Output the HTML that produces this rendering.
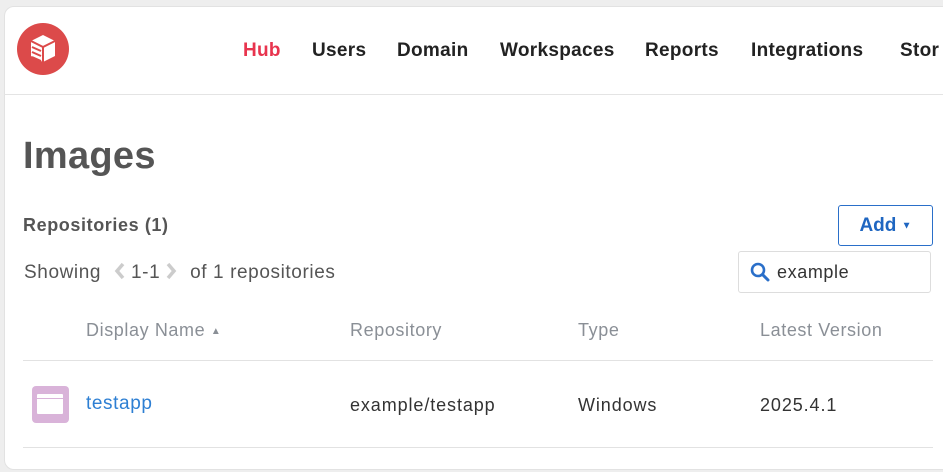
<!DOCTYPE html>
<html><head><style>
body{margin:0;width:943px;height:472px;background:#eeeeee;font-family:"Liberation Sans",sans-serif;overflow:hidden;position:relative}
.card{position:absolute;left:4px;top:6px;width:960px;height:462px;background:#fff;border:1px solid #e2e2e2;border-radius:10px}
.a{position:absolute;white-space:nowrap}
.nav{top:40px;font-size:19px;font-weight:bold;color:#222;letter-spacing:0.3px}
.hdr{top:320px;font-size:18px;color:#8a8f96;letter-spacing:0.6px}
.row{top:395px;font-size:18px;color:#333;letter-spacing:0.9px}
</style></head><body>
<div class="card"></div>
<div class="a" style="left:4px;top:94px;width:939px;height:1px;background:#e4e4e4"></div>
<svg class="a" style="left:17px;top:23px" width="52" height="52" viewBox="0 0 52 52">
<circle cx="26" cy="26" r="26" fill="#dc4a4a"/>
<path d="M26 12 L38 18 L38 33 L26 39 L14 33 L14 18 Z" fill="#fff"/>
<path d="M14 18 L26 24 L38 18 M26 24 L26 39" stroke="#dc4a4a" stroke-width="2" fill="none"/>
<path d="M15 24 L24 28 M15 29 L24 33 M15 34 L24 38" stroke="#dc4a4a" stroke-width="2"/>
</svg>
<div class="a nav" style="left:243px;color:#e8344e">Hub</div>
<div class="a nav" style="left:312px">Users</div>
<div class="a nav" style="left:397px">Domain</div>
<div class="a nav" style="left:500px">Workspaces</div>
<div class="a nav" style="left:645px">Reports</div>
<div class="a nav" style="left:751px">Integrations</div>
<div class="a nav" style="left:900px">Stor</div>
<div class="a" style="left:23px;top:135px;font-size:38px;font-weight:bold;color:#555;letter-spacing:0.3px">Images</div>
<div class="a" style="left:23px;top:215px;font-size:18px;font-weight:bold;color:#555;letter-spacing:0.6px">Repositories (1)</div>
<div class="a" style="left:838px;top:205px;width:95px;height:41px;border:1px solid #2a6fc9;border-radius:3px;box-sizing:border-box;color:#1f66c1;font-size:19px;font-weight:bold;line-height:39px;text-align:center">Add <span style="font-size:10px;vertical-align:middle">▼</span></div>
<div class="a" style="left:24px;top:262px;font-size:19px;color:#555;letter-spacing:0.6px">Showing <svg width="14" height="18" viewBox="0 0 14 18" style="vertical-align:-2px;margin:0 4px 0 6px"><path d="M10 2 L4 9 L10 16" stroke="#ccc" stroke-width="3.5" fill="none"/></svg>1-1<svg width="14" height="18" viewBox="0 0 14 18" style="vertical-align:-2px;margin:0 6px 0 4px"><path d="M4 2 L10 9 L4 16" stroke="#ccc" stroke-width="3.5" fill="none"/></svg> of 1 repositories</div>
<div class="a" style="left:738px;top:251px;width:193px;height:42px;border:1px solid #ddd;border-radius:3px;box-sizing:border-box"></div>
<svg class="a" style="left:750px;top:262px" width="20" height="20" viewBox="0 0 20 20"><circle cx="8" cy="8" r="6" stroke="#2a6fc9" stroke-width="2.6" fill="none"/><path d="M12.5 12.5 L18 18" stroke="#2a6fc9" stroke-width="3" stroke-linecap="round"/></svg>
<div class="a" style="left:777px;top:262px;font-size:18px;color:#333;letter-spacing:0.6px">example</div>
<div class="a hdr" style="left:86px">Display Name <span style="font-size:10px;vertical-align:middle">▲</span></div>
<div class="a hdr" style="left:350px">Repository</div>
<div class="a hdr" style="left:578px">Type</div>
<div class="a hdr" style="left:760px">Latest Version</div>
<div class="a" style="left:23px;top:360px;width:910px;height:1px;background:#e2e2e2"></div>
<div class="a" style="left:32px;top:386px;width:37px;height:37px;background:#d9b3d9;border-radius:4px"></div>
<div class="a" style="left:37px;top:394px;width:26px;height:20px;background:#fff;border-radius:1px"></div>
<div class="a" style="left:37px;top:398px;width:26px;height:1px;background:#d9b3d9"></div>
<div class="a row" style="left:86px;top:393px;color:#2d7fd3;font-size:19px;letter-spacing:0.6px">testapp</div>
<div class="a row" style="left:350px">example/testapp</div>
<div class="a row" style="left:578px">Windows</div>
<div class="a row" style="left:760px">2025.4.1</div>
<div class="a" style="left:23px;top:447px;width:910px;height:1px;background:#e2e2e2"></div>
</body></html>
